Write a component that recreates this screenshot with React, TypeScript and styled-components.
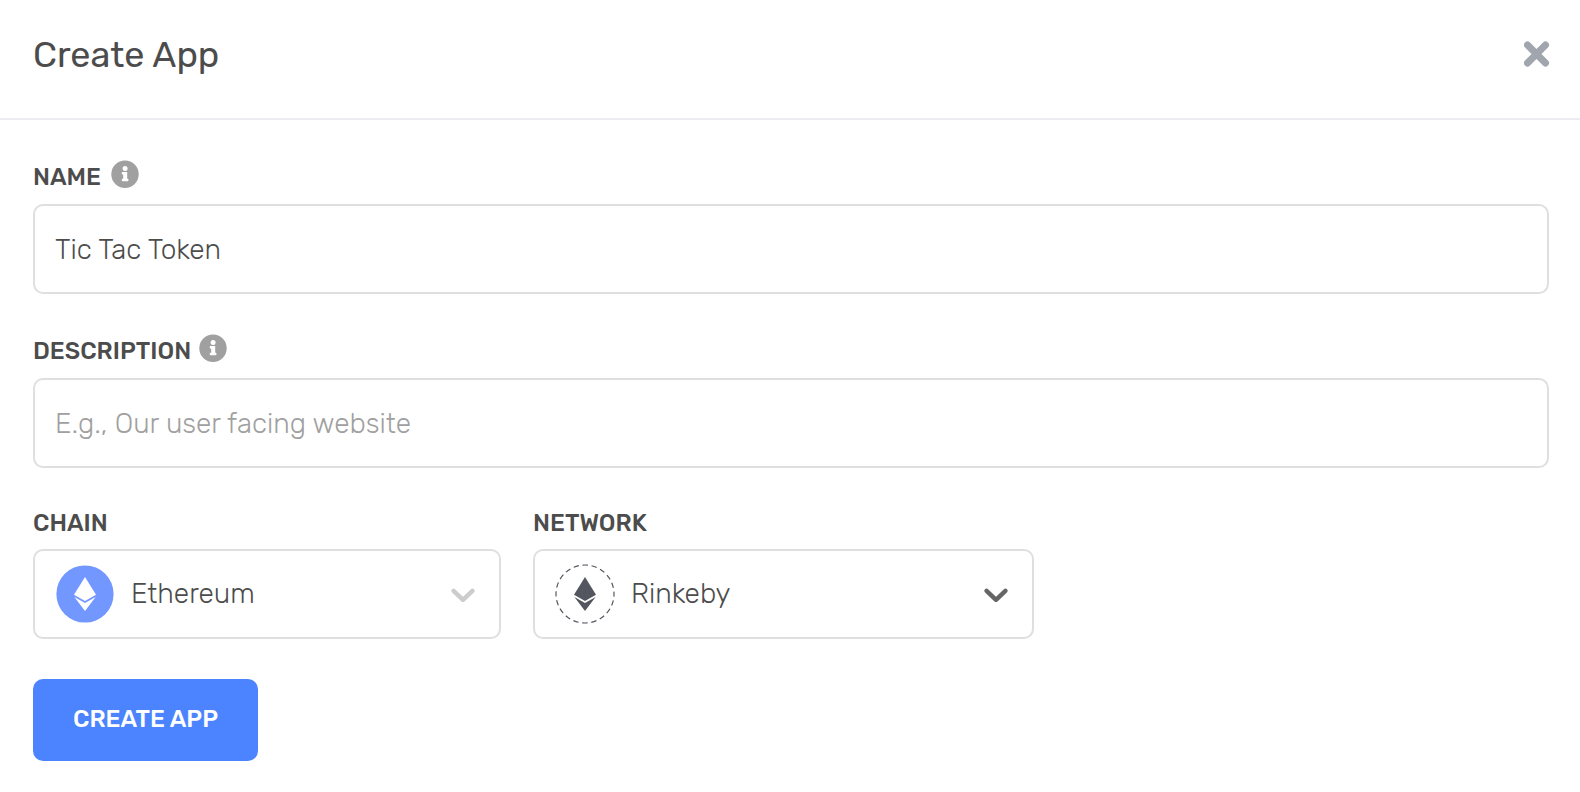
import React from "react";
import styled, { createGlobalStyle } from "styled-components";

const GlobalStyle = createGlobalStyle`
  *, *::before, *::after { box-sizing: border-box; }
  body { margin: 0; background: #fff; }
`;

const Dialog = styled.main`
  width: 1580px;
  height: 792px;
  overflow: hidden;
  background: #fff;
  color: #4c4c4c;
  font-family: Rubik, Roboto, "Liberation Sans", sans-serif;
`;

const Header = styled.header`
  display: flex;
  align-items: flex-start;
  justify-content: space-between;
  height: 120px;
  padding: 34px 30px 0 33px;
  border-bottom: 2px solid #ebebf1;
`;

const Title = styled.h1`
  margin: 0;
  font-size: 36px;
  font-weight: 400;
  line-height: 42px;
`;

const CloseButton = styled.button`
  display: block;
  margin-top: 7px;
  padding: 0;
  border: 0;
  background: none;
  line-height: 0;
`;

const Form = styled.div`
  display: flex;
  flex-direction: column;
  padding: 40px 31px 0 33px;
`;

const Field = styled.div<{ $width?: number; $labelHeight?: number }>`
  display: grid;
  grid-template-rows: ${(p) => p.$labelHeight ?? 44}px 90px;
  width: ${(p) => (p.$width ? `${p.$width}px` : "auto")};
  margin-bottom: 40px;
`;

const LabelRow = styled.div<{ $gap?: number }>`
  display: flex;
  align-items: flex-start;
  gap: ${(p) => p.$gap ?? 10}px;
`;

const Label = styled.label<{ $top?: number }>`
  padding-top: ${(p) => p.$top ?? 3}px;
  font-size: 24px;
  font-weight: 500;
  line-height: 28px;
`;

const TextInput = styled.input`
  width: 100%;
  height: 90px;
  padding: 0 20px;
  border: 2px solid #dfdfdf;
  border-radius: 10px;
  outline: 0;
  background: #fff;
  color: #4c4c4c;
  font-family: inherit;
  font-size: 28px;
  font-weight: 300;
  &::placeholder { color: #a0a0a0; opacity: 1; }
`;

const SelectRow = styled.div`
  display: flex;
  gap: 32px;
`;

const Select = styled.div`
  display: flex;
  align-items: center;
  height: 90px;
  padding: 0 24px 0 20px;
  border: 2px solid #dfdfdf;
  border-radius: 10px;
`;

const SelectValue = styled.span`
  flex: 1;
  margin-left: 16px;
  font-size: 28px;
  font-weight: 300;
  line-height: 34px;
`;

const ChevronSvg = styled.svg`
  margin-top: 2px;
`;

const SubmitButton = styled.button`
  width: 225px;
  height: 82px;
  padding: 0 0 2px;
  border: 0;
  border-radius: 10px;
  background: #4c84ff;
  color: #fff;
  font-family: inherit;
  font-size: 24px;
  font-weight: 500;
`;

const InfoIcon = () => (
  <svg width="28" height="28" viewBox="0 0 28 28">
    <circle cx="14" cy="14.2" r="13.7" fill="#a0a0a0" />
    <circle cx="14.1" cy="8.5" r="2.5" fill="#fff" />
    <path d="M11.4 12h4.8v6.7h.6q.6 0 .6.6v1.3q0 .6-.6.6h-5.4q-.6 0-.6-.6v-1.3q0-.6.6-.6h.8v-4.2h-.8q-.6 0-.6-.6v-1.3q0-.6.6-.6z" fill="#fff" />
  </svg>
);

const CloseIcon = () => (
  <svg width="26" height="26" viewBox="0 0 26 26">
    <path d="M3.5 4L21.5 22M21.5 4L3.5 22" stroke="#a0a5ae" strokeWidth="7" strokeLinecap="round" />
  </svg>
);

const Chevron = ({ color }: { color: string }) => (
  <ChevronSvg width="24" height="16" viewBox="0 0 24 16" fill="none">
    <path d="M2.6 3.8L12 12.8L21.4 3.8" stroke={color} strokeWidth="4.4" strokeLinecap="round" strokeLinejoin="round" />
  </ChevronSvg>
);

const ChainIcon = ({ outlined }: { outlined?: boolean }) => (
  <svg width="60" height="60" viewBox="0 0 60 60">
    {outlined ? (
      <circle cx="30" cy="30" r="29" fill="none" stroke="#53565f" strokeWidth="1.2" strokeDasharray="5.4 3.711" strokeDashoffset="2.7" />
    ) : (
      <circle cx="30" cy="30" r="28.6" fill="#7297ff" />
    )}
    <g fill={outlined ? "#53565f" : "#fff"}>
      <path d="M30 13L41 30.8L30 37L19 30.8Z" />
      <path d="M19.4 32.9L30 39L40.6 32.9L30 47Z" />
    </g>
  </svg>
);

export default function App() {
  return (
    <Dialog>
      <GlobalStyle />
      <Header>
        <Title>Create App</Title>
        <CloseButton aria-label="Close">
          <CloseIcon />
        </CloseButton>
      </Header>
      <Form>
        <Field>
          <LabelRow>
            <Label htmlFor="name">NAME</Label>
            <InfoIcon />
          </LabelRow>
          <TextInput id="name" defaultValue="Tic Tac Token" />
        </Field>
        <Field>
          <LabelRow $gap={8}>
            <Label htmlFor="description">DESCRIPTION</Label>
            <InfoIcon />
          </LabelRow>
          <TextInput id="description" placeholder="E.g., Our user facing website" />
        </Field>
        <SelectRow>
          <Field $width={468} $labelHeight={41}>
            <Label as="span" $top={1}>CHAIN</Label>
            <Select>
              <ChainIcon />
              <SelectValue>Ethereum</SelectValue>
              <Chevron color="#cccccc" />
            </Select>
          </Field>
          <Field $width={501} $labelHeight={41}>
            <Label as="span" $top={1}>NETWORK</Label>
            <Select>
              <ChainIcon outlined />
              <SelectValue>Rinkeby</SelectValue>
              <Chevron color="#666666" />
            </Select>
          </Field>
        </SelectRow>
        <SubmitButton>CREATE APP</SubmitButton>
      </Form>
    </Dialog>
  );
}
